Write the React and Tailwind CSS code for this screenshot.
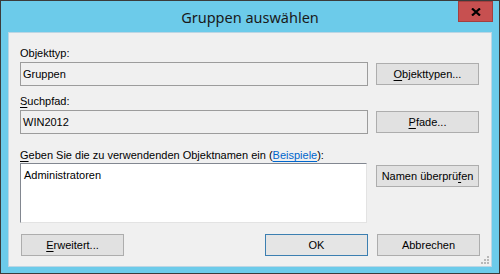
import React from "react";

/* ================= SMALL PARTS ================= */
const Key = ({ children }) => <span className="underline underline-offset-[2px]">{children}</span>;

const Btn = ({ children, primary = false, className = "" }) => (
  <button
    type="button"
    className={`h-[22px] w-[103px] shrink-0 border text-[11px] leading-[20px] text-black ${
      primary ? "border-[#3c7fb1] bg-[#e5e5e5]" : "border-[#adadad] bg-[#e1e1e1]"
    } ${className}`}
  >
    {children}
  </button>
);

const Field = ({ value }) => (
  <div className="h-[24px] w-[348px] shrink-0 border border-[#9c9c9c] bg-[#f0f0f0] px-[2px] text-[11px] leading-[22px] text-black">
    {value}
  </div>
);

const App = () => {
  return (
    <div
      className="flex h-[274px] w-[500px] flex-col border border-[#3b3b3b] bg-[#6ccbea]"
      style={{ fontFamily: '"Liberation Sans", Arial, sans-serif' }}
    >
      {/* Title bar */}
      <div className="relative flex h-[31px] shrink-0 items-center justify-center">
        <span className="text-[14.5px] leading-[20px] text-[#1a1a1a]" style={{ fontFamily: '"Noto Sans", sans-serif' }}>
          Gruppen auswählen
        </span>
        <div className="absolute right-[6px] top-0 flex h-[21px] w-[35px] items-center justify-center border border-[#a33f3f] bg-[#c75050]">
          <svg width="10" height="8" viewBox="0 0 10 8">
            <path d="M1 0.5 L9 7.5 M9 0.5 L1 7.5" stroke="#000" strokeWidth="2.2" />
          </svg>
        </div>
      </div>

      {/* Panel */}
      <div className="relative mx-[7px] mb-[6px] flex flex-1 flex-col border border-[#bcd6e4] bg-[#f0f0f0] px-[11px] pt-[12px] text-[11px] text-black">
        <div className="h-[16px] leading-[16px]">Objekttyp:</div>
        <div className="mt-[1px] flex items-start gap-[8px]">
          <Field value="Gruppen" />
          <Btn className="mt-[1px]">
            <Key>O</Key>bjekttypen...
          </Btn>
        </div>

        <div className="mt-[7px] h-[16px] leading-[16px]">
          <Key>S</Key>uchpfad:
        </div>
        <div className="mt-[1px] flex items-start gap-[8px]">
          <Field value="WIN2012" />
          <Btn className="mt-[1px]">
            <Key>P</Key>fade...
          </Btn>
        </div>

        <div className="mt-[13px] h-[16px] leading-[16px]">
          <Key>G</Key>eben Sie die zu verwendenden Objektnamen ein (
          <span className="text-[#0066cc] underline underline-offset-[2px]">Beispiele</span>):
        </div>
        <div className="flex items-start gap-[8px]">
          <div className="h-[60px] w-[347px] shrink-0 border border-[#828790] border-b-[#e3e3e3] border-r-[#e3e3e3] bg-white px-[3px] pt-[3px] leading-[16px]">
            Administratoren
          </div>
          <Btn className="ml-[1px] mt-[2px]">
            Namen überprü<Key>f</Key>en
          </Btn>
        </div>

        <div className="mt-[11px] flex items-start">
          <Btn className="ml-[1px]">
            <Key>E</Key>rweitert...
          </Btn>
          <div className="flex-1" />
          <Btn primary>OK</Btn>
          <Btn className="ml-[9px]">Abbrechen</Btn>
        </div>

        {/* resize grip */}
        <div className="absolute bottom-[2px] right-[2px] grid grid-cols-3 gap-[1px]">
          <span className="h-[2px] w-[2px]" />
          <span className="h-[2px] w-[2px]" />
          <span className="h-[2px] w-[2px] bg-[#b8b8b8]" />
          <span className="h-[2px] w-[2px]" />
          <span className="h-[2px] w-[2px] bg-[#b8b8b8]" />
          <span className="h-[2px] w-[2px] bg-[#b8b8b8]" />
          <span className="h-[2px] w-[2px] bg-[#b8b8b8]" />
          <span className="h-[2px] w-[2px] bg-[#b8b8b8]" />
          <span className="h-[2px] w-[2px] bg-[#b8b8b8]" />
        </div>
      </div>
    </div>
  );
};

export default App;
